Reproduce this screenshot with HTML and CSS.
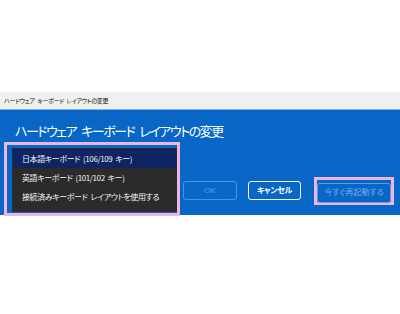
FILE: index.html
```html
<!DOCTYPE html>
<html lang="ja">
<head>
<meta charset="utf-8">
<link rel="stylesheet" href="styles.css">
</head>
<body>
<div class="window">
  <div class="titlebar">ハードウェア キーボード レイアウトの変更</div>
  <div class="content">
    <h1 class="heading">ハードウェア キーボード レイアウトの変更</h1>
    <div class="row">
      <div class="mark mark-list">
        <ul class="dropdown">
          <li class="item selected">日本語キーボード (106/109 キー)</li>
          <li class="item">英語キーボード (101/102 キー)</li>
          <li class="item">接続済みキーボード レイアウトを使用する</li>
        </ul>
      </div>
      <button class="btn btn-ok" disabled>OK</button>
      <button class="btn btn-cancel">キャンセル</button>
      <div class="mark mark-restart">
        <button class="btn btn-restart" disabled>今すぐ再起動する</button>
      </div>
    </div>
  </div>
</div>
</body>
</html>
```
FILE: styles.css
```css
html, body {
  margin: 0;
  padding: 0;
  background: #ffffff;
}
body {
  width: 400px;
  height: 314px;
  overflow: hidden;
  font-family: "Liberation Sans", "Noto Sans CJK JP", sans-serif;
  font-feature-settings: "palt";
}
.window {
  margin-top: 92px;
  width: 400px;
}
.titlebar {
  height: 17px;
  background: #f0f0f0;
  color: #111;
  font-size: 6px;
  letter-spacing: -0.25px;
  word-spacing: 1px;
  padding-left: 4px;
  display: flex;
  align-items: center;
  border-bottom: 1px solid #7fb2e6;
  white-space: nowrap;
}
.content {
  background: #0867c6;
  height: 105px;
  box-sizing: border-box;
  padding-top: 12px;
}
.heading {
  margin: 0 0 0 15px;
  height: 20px;
  line-height: 20px;
  font-size: 13px;
  font-weight: normal;
  letter-spacing: -1.5px;
  word-spacing: 3px;
  color: #ffffff;
  white-space: nowrap;
}
.row {
  display: flex;
  align-items: flex-start;
}
.mark {
  border: 3px solid #f0b4e0;
  box-sizing: border-box;
}
.mark-list {
  margin-left: 4px;
  width: 176px;
  height: 74px;
  padding: 3px 0 1px 5px;
}
.dropdown {
  list-style: none;
  margin: 0;
  padding: 1px 1px 5px 1px;
  background: #2b2b2b;
  height: 100%;
  box-sizing: border-box;
}
.item {
  height: 19px;
  line-height: 19px;
  padding-left: 9px;
  font-family: "Noto Sans CJK JP", sans-serif;
  font-size: 8px;
  letter-spacing: -0.4px;
  word-spacing: 1.5px;
  color: #f2f2f2;
  white-space: nowrap;
}
.item.selected {
  background: #0e2463;
}
.btn {
  font-family: "Liberation Sans", "Noto Sans CJK JP", sans-serif;
  font-feature-settings: "palt";
  height: 19px;
  padding: 0;
  border-radius: 3px;
  background: transparent;
  font-size: 8px;
  line-height: 17px;
  box-sizing: border-box;
}
.btn-ok {
  margin: 39px 0 0 3px;
  width: 54px;
  border: 1px solid #4f92d9;
  color: #5c9ce0;
}
.btn-cancel {
  margin: 39px 0 0 11px;
  width: 53px;
  border: 1px solid #ffffff;
  color: #ffffff;
  font-weight: bold;
  letter-spacing: -0.3px;
}
.mark-restart {
  margin: 35px 0 0 13px;
  width: 80px;
  height: 28px;
  padding: 1px 0 0 0;
}
.btn-restart {
  width: 74px;
  height: 20px;
  border: 1px solid #5c9de2;
  color: #77acea;
  letter-spacing: 0px;
}
```
